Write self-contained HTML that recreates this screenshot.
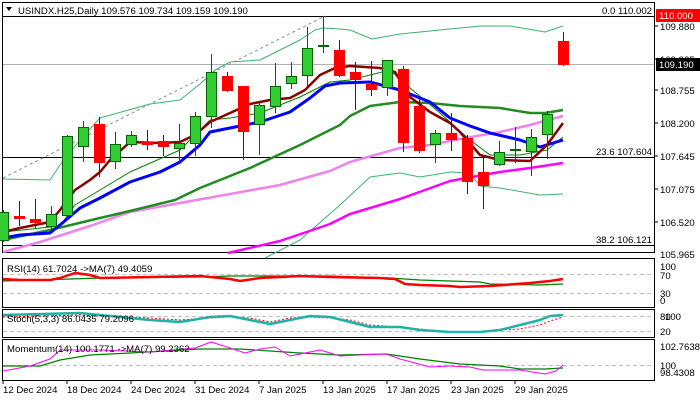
<!DOCTYPE html>
<html><head><meta charset="utf-8"><style>
html,body{margin:0;padding:0;background:#fff;width:700px;height:400px;overflow:hidden}
svg{display:block;font-family:"Liberation Sans",sans-serif;font-size:9.6px}
</style></head><body>
<svg id="s" width="700" height="400" xmlns="http://www.w3.org/2000/svg">
<rect width="700" height="400" fill="#fff"/>
<rect x="2.5" y="2.5" width="652" height="250" fill="none" stroke="#000"/>
<rect x="2.5" y="258.5" width="652" height="49" fill="none" stroke="#000"/>
<rect x="2.5" y="309.5" width="652" height="28" fill="none" stroke="#000"/>
<rect x="2.5" y="339.5" width="652" height="41" fill="none" stroke="#000"/>
<line x1="3" y1="16.5" x2="654" y2="16.5" stroke="#000"/>
<line x1="3" y1="64.5" x2="654" y2="64.5" stroke="#b0b0b0"/>
<line x1="3" y1="157.5" x2="654" y2="157.5" stroke="#000"/>
<line x1="3" y1="245.5" x2="654" y2="245.5" stroke="#000"/>
<line x1="3" y1="178" x2="325" y2="16" stroke="#8090a0" stroke-dasharray="3,3"/>
<g stroke="#c0c0c0" stroke-dasharray="4,3">
<line x1="3" y1="274.5" x2="654" y2="274.5"/><line x1="3" y1="293.5" x2="654" y2="293.5"/>
<line x1="3" y1="316.5" x2="654" y2="316.5"/><line x1="3" y1="331.5" x2="654" y2="331.5"/>
<line x1="3" y1="365.5" x2="654" y2="365.5"/>
</g>
<g fill="none" stroke-linejoin="round">
<polyline stroke="#3cb371" stroke-width="1" points="3,179 50,180 60,165 80,140 100,118 150,104 180,100 200,84 215,70 230,62 260,60 300,40 315,30 323,28 340,29 350,30 372,39 400,34 430,31 480,26 510,26 545,32 563,26"/>
<polyline stroke="#3cb371" stroke-width="1" points="265,258 300,240 340,205 370,177 400,173 420,177 450,172 470,173 480,186 500,188 540,195 563,194"/>
<polyline stroke="#ee82ee" stroke-width="2.5" points="3,252 40,242 90,226 130,212 180,203 230,194 280,185 330,171 350,162 400,148 430,145 460,139 500,132 530,125 563,116"/>
<polyline stroke="#ff00ff" stroke-width="2.5" points="228,253 280,241 330,224 350,214 400,199 450,181 500,172 530,168 563,163"/>
<polyline stroke="#228b22" stroke-width="2.5" points="3,240 50,230 100,218 130,211 175,200 200,188 250,168 300,145 340,125 350,116 370,106 400,102 430,103 460,106 500,108 530,113 545,113 563,110"/>
<polyline stroke="#008000" stroke-width="1" points="3,232 60,226 75,205 100,190 130,172 180,150 200,130 210,120 230,118 260,113 300,97 330,82 350,80 390,70 410,88 440,113 470,140 490,155 520,155 547,150 563,137"/>
<polyline stroke="#0000ff" stroke-width="3" points="3,238 20,235 50,233 60,225 80,208 100,198 130,182 160,172 180,162 200,145 210,132 230,128 260,122 290,112 310,98 325,86 340,83 370,82 400,90 430,102 450,118 470,126 490,133 520,140 540,147 563,140"/>
<polyline stroke="#8b0000" stroke-width="2.5" points="3,232 20,228 50,222 60,210 75,190 90,180 100,172 110,160 130,142 160,143 180,142 195,135 210,122 230,113 250,104 270,100 290,98 305,90 320,75 335,68 350,66 380,68 395,72 410,97 430,112 450,123 460,132 480,155 500,160 530,161 547,145 563,123"/>
<polyline stroke="#008000" stroke-width="1.2" points="3,281 70,279 100,278 200,277 230,276 330,276 390,278 420,280 480,282 490,284 540,285 563,284"/>
<polyline stroke="#ff0000" stroke-width="2.5" points="3,279 20,280 50,280 60,278 75,273 90,275 100,278 200,276 230,279 240,281 260,278 300,276 330,277 380,278 395,279 405,284 420,285 450,286 460,287 490,286 530,283 550,281 563,279"/>
<polyline stroke="#ff0000" stroke-width="1" stroke-dasharray="2,2" points="3,317 80,315 100,316 150,318 180,320 210,318 230,317 250,318 270,322 290,318 310,317 330,318 350,320 370,325 400,327 420,329 450,332 480,332 500,330 520,329 540,325 550,321 563,317"/>
<polyline stroke="#20b2aa" stroke-width="2.5" points="3,315 80,313 100,315 150,320 180,322 210,317 230,316 250,320 270,324 290,320 310,316 330,317 350,322 370,327 400,327 420,330 450,332 480,332 500,330 520,325 540,320 550,316 563,315"/>
<polyline stroke="#008000" stroke-width="1.2" points="3,366 40,366 60,360 90,355 130,353 200,349 240,349 285,352 300,353 340,355 386,354 420,359 460,364 500,366 520,369 545,369 563,368"/>
<polyline stroke="#ff00ff" stroke-width="1" points="3,371 30,366 50,359 60,350 100,350 150,352 195,348 211,342 230,348 245,353 260,349 275,347 290,356 320,350 340,356 360,355 386,354 400,359 430,367 450,366 470,367 483,370 520,370 545,374 556,371 563,365"/>
</g>
<g id="c"></g>
<path d="M6,7 L12,7 L9,11 Z" fill="#000"/>
<text x="18" y="14" fill="#000">USINDX.H25,Daily  109.576 109.734 109.159 109.190</text>
<text x="7" y="272" fill="#000">RSI(14) 61.7024  -&gt;MA(7) 49.4059</text>
<text x="7" y="322" fill="#000">Stoch(5,3,3) 86.0435 79.2096</text>
<text x="7" y="352" fill="#000">Momentum(14) 100.1771  -&gt;MA(7) 99.2362</text>
<g text-anchor="end" fill="#000">
<text x="652" y="14">0.0 110.002</text>
<text x="652" y="155">23.6 107.604</text>
<text x="652" y="243">38.2 106.121</text>
</g>
<g fill="#000">
<text x="660" y="30">109.880</text><text x="660" y="63">109.325</text><text x="660" y="94">108.755</text>
<text x="660" y="127">108.200</text><text x="660" y="160">107.645</text><text x="660" y="193">107.075</text>
<text x="660" y="226">106.520</text><text x="660" y="258">105.965</text>
<text x="660" y="270">100</text><text x="660" y="279">70</text><text x="660" y="297">30</text><text x="660" y="304">0</text>
<text x="660" y="320">80</text><text x="665" y="320">100</text><text x="660" y="335">20</text>
<text x="660" y="350">102.7638</text><text x="660" y="369">100</text><text x="660" y="376">98.4308</text>
</g>
<g stroke="#000"><line x1="654" y1="26" x2="658" y2="26"/><line x1="654" y1="59" x2="658" y2="59"/><line x1="654" y1="90" x2="658" y2="90"/><line x1="654" y1="123" x2="658" y2="123"/><line x1="654" y1="156" x2="658" y2="156"/><line x1="654" y1="189" x2="658" y2="189"/><line x1="654" y1="222" x2="658" y2="222"/></g>
<rect x="656" y="9" width="44" height="13" fill="#ff0000"/>
<text x="659" y="19" fill="#fff">110.000</text>
<rect x="656" y="58" width="44" height="13" fill="#000"/>
<text x="659" y="68" fill="#fff">109.190</text>
<g fill="#000">
<text x="3" y="393">12 Dec 2024</text><text x="67" y="393">18 Dec 2024</text><text x="131" y="393">24 Dec 2024</text>
<text x="195" y="393">31 Dec 2024</text><text x="259" y="393">7 Jan 2025</text><text x="323" y="393">13 Jan 2025</text>
<text x="387" y="393">17 Jan 2025</text><text x="451" y="393">23 Jan 2025</text><text x="515" y="393">29 Jan 2025</text>
</g>
<g stroke="#000"><line x1="3" y1="381" x2="3" y2="384"/><line x1="67" y1="381" x2="67" y2="384"/><line x1="131" y1="381" x2="131" y2="384"/><line x1="195" y1="381" x2="195" y2="384"/><line x1="259" y1="381" x2="259" y2="384"/><line x1="323" y1="381" x2="323" y2="384"/><line x1="387" y1="381" x2="387" y2="384"/><line x1="451" y1="381" x2="451" y2="384"/><line x1="515" y1="381" x2="515" y2="384"/></g>
</svg>
<script>
var d=[[240,212,210,242],[216,218,201,226],[219,222,199,228],[226,214,206,230],[215,136,135,220],[146,127,121,162],[124,162,117,177],[161,144,132,169],[144,135,131,147],[142,144,130,150],[141,146,135,156],[148,143,124,162],[143,116,112,156],[116,72,54,128],[76,90,72,92],[86,131,86,160],[124,105,103,155],[106,86,63,113],[83,76,62,89],[75,48,27,86],[46,46,16,53],[50,75,40,77],[72,79,62,110],[84,89,61,96],[87,60,60,96],[69,142,66,152],[106,150,98,153],[144,133,130,163],[133,139,113,151],[138,181,135,194],[172,185,158,209],[164,152,141,166],[150,150,127,163],[151,137,129,176],[134,114,111,159],[41,64,32,66]];
var g=document.getElementById('c'),h='';
d.forEach(function(c,i){var x=3+16*i,up=c[1]<=c[0],col=up?'#32cd32':'#ff0000',st=up?'#006400':'#8b0000';
var t=Math.min(c[0],c[1]),b=Math.max(c[0],c[1]);
h+='<line x1="'+(x+.5)+'" y1="'+c[2]+'" x2="'+(x+.5)+'" y2="'+c[3]+'" stroke="'+st+'"/>';
if(b-t<2)h+='<rect x="'+(x-5)+'" y="'+(t-1)+'" width="11" height="2" fill="'+st+'"/>';
else h+='<rect x="'+(x-4.5)+'" y="'+(t+.5)+'" width="10" height="'+(b-t)+'" fill="'+col+'" stroke="'+(up?st:col)+'"/>';});
g.innerHTML=h;
</script>
</body></html>
